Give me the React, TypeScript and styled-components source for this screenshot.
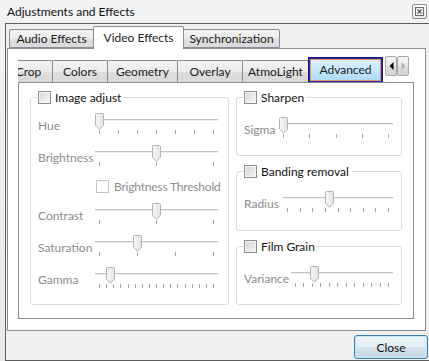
import React from 'react';
import styled, { createGlobalStyle } from 'styled-components';

const GlobalStyle = createGlobalStyle`
  html, body {
    margin: 0;
    padding: 0;
  }
  body {
    width: 429px;
    height: 361px;
    overflow: hidden;
    background: #ebedef;
    font-family: Lato, 'Liberation Sans', sans-serif;
    font-size: 12px;
    color: #1b1b1b;
  }
`;

const Window = styled.div`
  width: 429px;
  height: 361px;
  overflow: hidden;
  display: flex;
  flex-direction: column;
  background: linear-gradient(180deg, #f1f3f5 0%, #e7eaed 100%);
`;

const TitleBar = styled.div`
  height: 23px;
  flex: none;
  display: flex;
  align-items: center;
  justify-content: space-between;
  padding: 0 2px 1px 7px;
  box-sizing: border-box;
`;

const TitleText = styled.span`
  font-size: 12px;
  color: #111;
`;

const CloseBox = styled.div`
  width: 15px;
  height: 15px;
  box-sizing: border-box;
  border: 1px solid #8d8f92;
  border-radius: 2px;
  background: linear-gradient(180deg, #fbfbfb, #e6e8ea);
  display: flex;
  align-items: center;
  justify-content: center;
`;

const Client = styled.div`
  margin-left: 5px;
  width: 430px;
  height: 338px;
  box-sizing: border-box;
  border: 1px solid #5d5d5d;
  background: #f0f0f0;
  display: flex;
  flex-direction: column;
`;

const TabWidget = styled.div`
  margin: 2px 0 0 1px;
  width: 419px;
  display: flex;
  flex-direction: column;
`;

const MainTabBar = styled.div`
  height: 22px;
  display: flex;
  align-items: flex-end;
  padding-left: 2px;
`;

const MainTab = styled.div<{ $w: number; $active?: boolean }>`
  width: ${(p) => p.$w}px;
  height: ${(p) => (p.$active ? 23 : 19)}px;
  margin-bottom: ${(p) => (p.$active ? -1 : 0)}px;
  margin-left: -1px;
  box-sizing: border-box;
  border: 1px solid #898c95;
  border-bottom: ${(p) => (p.$active ? 'none' : '1px solid #898c95')};
  border-radius: 2px 2px 0 0;
  background: ${(p) =>
    p.$active ? '#ffffff' : 'linear-gradient(180deg, #f3f3f3 0%, #ebebeb 50%, #dedede 51%, #dadada 100%)'};
  display: flex;
  align-items: center;
  justify-content: center;
  padding-bottom: ${(p) => (p.$active ? 2 : 0)}px;
  position: relative;
  z-index: ${(p) => (p.$active ? 2 : 1)};
  &:first-child {
    margin-left: 0;
  }
`;

const MainPane = styled.div`
  height: 283px;
  box-sizing: border-box;
  border: 1px solid #898c95;
  background: #ffffff;
  padding: 8px 11px 11px 10px;
  display: flex;
  flex-direction: column;
`;

const SubTabBar = styled.div`
  height: 25px;
  display: flex;
  align-items: flex-end;
`;

const SubTabScroller = styled.div`
  width: 366px;
  height: 25px;
  overflow: hidden;
  display: flex;
  align-items: flex-end;
`;

const SubTabRow = styled.div`
  display: flex;
  align-items: flex-end;
  margin-left: -14px;
  height: 25px;
`;

const SubTab = styled.div<{ $w: number }>`
  width: ${(p) => p.$w}px;
  height: 22px;
  flex: none;
  box-sizing: border-box;
  border: 1px solid #898c95;
  border-bottom: none;
  margin-right: -1px;
  border-radius: 2px 2px 0 0;
  background: linear-gradient(180deg, #f3f3f3 0%, #ebebeb 50%, #dedede 51%, #d9d9d9 100%);
  display: flex;
  align-items: center;
  justify-content: center;
  padding-bottom: 1px;
`;

const SubTabActive = styled.div<{ $w: number }>`
  width: ${(p) => p.$w}px;
  height: 26px;
  margin-bottom: -1px;
  flex: none;
  box-sizing: border-box;
  border: 1px solid #15157e;
  box-shadow: inset 0 0 0 1px #2e2ea4, inset 0 0 0 2px #e39168;
  background: linear-gradient(180deg, #e4f4fd 0%, #c4e6fa 50%, #a9daf6 100%);
  display: flex;
  align-items: center;
  justify-content: center;
  padding-bottom: 2px;
  position: relative;
  z-index: 2;
`;

const ArrowPair = styled.div`
  display: flex;
  align-self: flex-start;
  margin: -1px 0 0 1px;
`;

const ArrowButton = styled.div`
  width: 12px;
  height: 20px;
  box-sizing: border-box;
  border: 1px solid #a9a9a9;
  border-radius: 2px;
  background: linear-gradient(180deg, #f6f6f6 0%, #e9e9e9 50%, #dcdcdc 51%, #d4d4d4 100%);
  display: flex;
  align-items: center;
  justify-content: center;
`;

const SubPane = styled.div`
  height: 237px;
  box-sizing: border-box;
  border: 1px solid #898c95;
  background: #ffffff;
  padding: 8px 12px 13px 11px;
  display: grid;
  grid-template-columns: 199px 166px;
  column-gap: 7px;
`;

const RightColumn = styled.div`
  display: flex;
  flex-direction: column;
  gap: 9px;
`;

const Group = styled.fieldset<{ $padTop: number; $padRight: number }>`
  margin: 0;
  min-width: 0;
  box-sizing: border-box;
  border: 1px solid #d9dcdf;
  border-radius: 3px;
  padding: ${(p) => p.$padTop}px ${(p) => p.$padRight}px 14px 7px;
  display: flex;
  flex-direction: column;
  gap: 10px;
  flex: 1;
`;

const GroupTitle = styled.legend`
  margin-left: -1px;
  padding: 0 2px 0 1px;
  height: 13px;
`;

const TitleInner = styled.span`
  display: inline-flex;
  align-items: center;
  gap: 4px;
  height: 13px;
  line-height: 13px;
  color: #111;
  white-space: nowrap;
`;

const CheckBox = styled.span<{ $disabled?: boolean }>`
  width: 13px;
  height: 13px;
  flex: none;
  box-sizing: border-box;
  border: 1px solid ${(p) => (p.$disabled ? '#c4c4c4' : '#8e8f8f')};
  background: ${(p) =>
    p.$disabled
      ? '#ffffff'
      : 'linear-gradient(135deg, #d4d4d4 0%, #e6e6e6 50%, #f6f6f6 100%)'};
  box-shadow: ${(p) => (p.$disabled ? 'none' : 'inset 0 0 0 1px #f4f4f4')};
`;

const SliderRow = styled.div`
  height: 22px;
  display: flex;
  align-items: center;
`;

const RowLabel = styled.span<{ $w: number }>`
  width: ${(p) => p.$w}px;
  flex: none;
  color: #8c8c8c;
  padding-top: 3px;
  white-space: nowrap;
`;

const OptionRow = styled.div<{ $indent: number }>`
  height: 16px;
  display: flex;
  align-items: flex-end;
  gap: 5px;
  padding-left: ${(p) => p.$indent}px;
  color: #8c8c8c;
  white-space: nowrap;
`;

const OptionText = styled.span`
  line-height: 13px;
  letter-spacing: -0.2px;
`;

const SliderBox = styled.div`
  position: relative;
  flex: 1;
  height: 22px;
`;

const Groove = styled.div`
  position: absolute;
  left: 0;
  right: 0;
  top: 6px;
  height: 2px;
  background: linear-gradient(180deg, #c2c2c2 50%, #ececec 50%);
`;

const Ticks = styled.div`
  position: absolute;
  left: 4px;
  right: 4px;
  top: 17px;
  display: flex;
  justify-content: space-between;
`;

const Tick = styled.span`
  width: 1px;
  height: 4px;
  background: #a8a8a8;
`;

const Thumb = styled.svg`
  position: absolute;
  top: 0;
`;

const BottomBar = styled.div`
  flex: 1;
  display: flex;
  align-items: flex-end;
  padding: 0 0 1px 348px;
`;

const PushButton = styled.div`
  width: 74px;
  height: 24px;
  box-sizing: border-box;
  border: 1px solid #3c7fb1;
  border-radius: 3px;
  background: linear-gradient(180deg, #eef5fa 0%, #e3edf4 48%, #d3e2ec 52%, #c9dae6 100%);
  box-shadow: inset 0 0 0 1px #bfe6f9;
  display: flex;
  align-items: center;
  justify-content: center;
  color: #111;
`;

interface SliderProps {
  ticks: number;
  value: number;
}

const Slider: React.FC<SliderProps> = ({ ticks, value }) => (
  <SliderBox>
    <Groove />
    <Ticks>
      {Array.from({ length: ticks }).map((_, i) => (
        <Tick key={`tick_${i}`} />
      ))}
    </Ticks>
    <Thumb
      width="9"
      height="17"
      viewBox="0 0 9 17"
      style={{ left: `calc(${value * 100}% - ${value * 9}px)` }}
    >
      <defs>
        <linearGradient id="thumbFill" x1="0" y1="0" x2="1" y2="0">
          <stop offset="0" stopColor="#f7f7f7" />
          <stop offset="1" stopColor="#e4e4e4" />
        </linearGradient>
      </defs>
      <path
        d="M1.5 0.5 H7.5 Q8.5 0.5 8.5 1.5 V12 L4.5 16.2 L0.5 12 V1.5 Q0.5 0.5 1.5 0.5 Z"
        fill="url(#thumbFill)"
        stroke="#b3b3b3"
      />
    </Thumb>
  </SliderBox>
);

interface ParamRowProps {
  label: string;
  labelWidth: number;
  ticks: number;
  value: number;
}

const ParamRow: React.FC<ParamRowProps> = ({ label, labelWidth, ticks, value }) => (
  <SliderRow>
    <RowLabel $w={labelWidth}>{label}</RowLabel>
    <Slider ticks={ticks} value={value} />
  </SliderRow>
);

const GroupHeader: React.FC<{ title: string }> = ({ title }) => (
  <GroupTitle>
    <TitleInner>
      <CheckBox />
      {title}
    </TitleInner>
  </GroupTitle>
);

const App: React.FC = () => {
  const subTabs = [
    { name: 'Crop', w: 49 },
    { name: 'Colors', w: 56 },
    { name: 'Geometry', w: 71 },
    { name: 'Overlay', w: 66 },
    { name: 'AtmoLight', w: 67 },
  ];

  return (
    <Window>
      <GlobalStyle />
      <TitleBar>
        <TitleText>Adjustments and Effects</TitleText>
        <CloseBox>
          <svg width="9" height="9" viewBox="0 0 9 9">
            <rect x="0.5" y="0.5" width="8" height="8" fill="none" stroke="#6e6e6e" />
            <path d="M2.5 2.5 L6.5 6.5 M6.5 2.5 L2.5 6.5" stroke="#555" strokeWidth="1.2" />
          </svg>
        </CloseBox>
      </TitleBar>
      <Client>
        <TabWidget>
          <MainTabBar>
            <MainTab $w={85}>Audio Effects</MainTab>
            <MainTab $w={91} $active>
              Video Effects
            </MainTab>
            <MainTab $w={97}>Synchronization</MainTab>
          </MainTabBar>
          <MainPane>
            <SubTabBar>
              <SubTabScroller>
                <SubTabRow>
                  {subTabs.map((t) => (
                    <SubTab key={t.name} $w={t.w}>
                      {t.name}
                    </SubTab>
                  ))}
                  <SubTabActive $w={75}>Advanced</SubTabActive>
                </SubTabRow>
              </SubTabScroller>
              <ArrowPair>
                <ArrowButton>
                  <svg width="5" height="8" viewBox="0 0 5 8">
                    <path d="M4.5 0 V8 L0.5 4 Z" fill="#000" />
                  </svg>
                </ArrowButton>
                <ArrowButton>
                  <svg width="5" height="8" viewBox="0 0 5 8">
                    <path d="M0.5 0 V8 L4.5 4 Z" fill="#b4b4b4" />
                  </svg>
                </ArrowButton>
              </ArrowPair>
            </SubTabBar>
            <SubPane>
              <Group $padTop={9} $padRight={10}>
                <GroupHeader title="Image adjust" />
                <ParamRow label="Hue" labelWidth={57} ticks={7} value={0} />
                <ParamRow label="Brightness" labelWidth={57} ticks={3} value={0.5} />
                <OptionRow $indent={58}>
                  <CheckBox $disabled />
                  <OptionText>Brightness Threshold</OptionText>
                </OptionRow>
                <ParamRow label="Contrast" labelWidth={57} ticks={3} value={0.5} />
                <ParamRow label="Saturation" labelWidth={57} ticks={4} value={0.33} />
                <ParamRow label="Gamma" labelWidth={57} ticks={17} value={0.1} />
              </Group>
              <RightColumn>
                <Group $padTop={13} $padRight={8}>
                  <GroupHeader title="Sharpen" />
                  <ParamRow label="Sigma" labelWidth={35} ticks={5} value={0} />
                </Group>
                <Group $padTop={13} $padRight={8}>
                  <GroupHeader title="Banding removal" />
                  <ParamRow label="Radius" labelWidth={39} ticks={9} value={0.42} />
                </Group>
                <Group $padTop={13} $padRight={8}>
                  <GroupHeader title="Film Grain" />
                  <ParamRow label="Variance" labelWidth={47} ticks={12} value={0.2} />
                </Group>
              </RightColumn>
            </SubPane>
          </MainPane>
        </TabWidget>
        <BottomBar>
          <PushButton>Close</PushButton>
        </BottomBar>
      </Client>
    </Window>
  );
};

export default App;
